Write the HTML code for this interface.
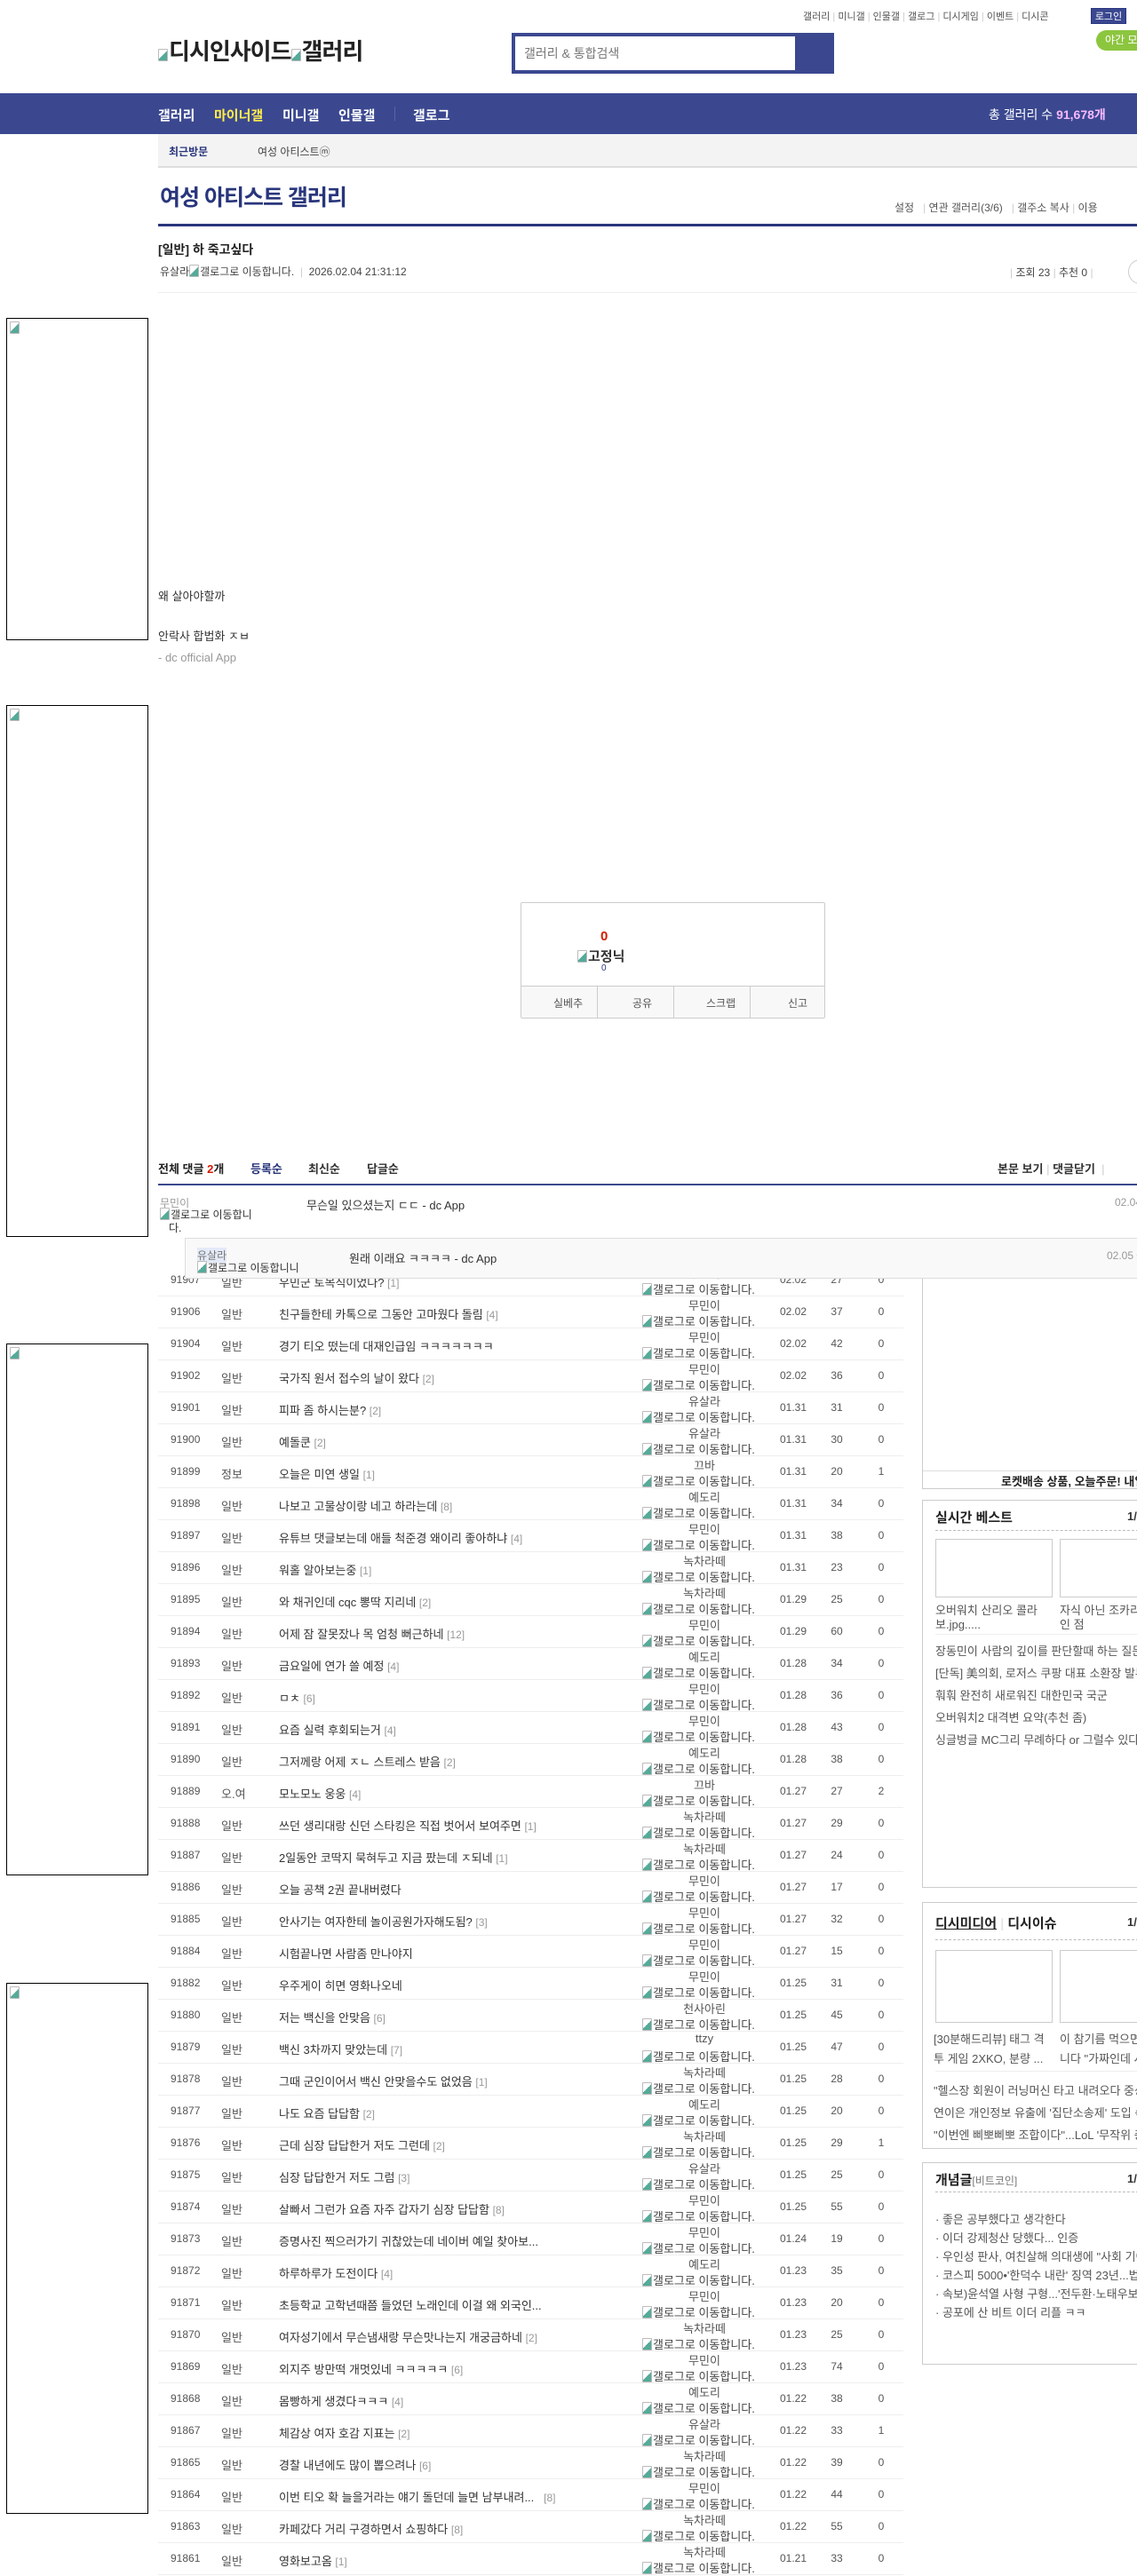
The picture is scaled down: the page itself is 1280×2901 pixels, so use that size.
<!DOCTYPE html>
<html><head><meta charset="utf-8">
<style>
*{margin:0;padding:0;box-sizing:border-box}
body{width:1280px;height:2880px;position:relative;overflow:hidden;background:#fff;font-family:"Liberation Sans","Noto Sans CJK KR",sans-serif;font-size:13px;color:#333}
.a{position:absolute;white-space:nowrap}
.ad{position:absolute;left:7px;width:160px;border:1px solid #000}
.r{position:absolute;left:178px;width:839px;height:36px;border-bottom:1px solid #eee;font-size:13px}
.r span{position:absolute;white-space:nowrap}
.r .n{left:14px;top:10px;font-size:12px;color:#555}
.r .t{left:71px;top:10px;color:#555}
.r .s{left:136px;top:10px;color:#333}
.r .s i{font-style:normal;color:#999;font-size:12px}
.r .w{left:545px;width:140px;text-align:center;top:0;color:#555}
.r .g{left:545px;top:18px;color:#444}
.r .d{left:700px;top:10px;font-size:12px;color:#555}
.r .v{left:752px;width:24px;text-align:center;top:10px;font-size:12px;color:#555}
.r .c{left:802px;width:24px;text-align:center;top:10px;font-size:12px;color:#555}
.ib{display:inline-block;width:11px;height:14px;border:1px solid #bbb;border-radius:1px;background:linear-gradient(135deg,#fff 50%,#5a9 50%);vertical-align:-2px;margin-right:1px}
.r .ib{position:static}
.sb{position:absolute;left:1038px;width:260px;border:1px solid #ccc;background:#fff}
.sb .h{position:absolute;left:14px;font-size:15px;font-weight:bold;color:#222}
.sb .dash{position:absolute;left:14px;right:0;border-top:1px dashed #bbb}
.sb .th{position:absolute;width:132px;border:1px solid #ccc}
.sb .li{position:absolute;left:14px;font-size:13px;color:#555;white-space:nowrap}
</style></head><body>

<div class="a" style="left:904px;top:10px;font-size:11px;color:#555">갤러리 <span style="color:#ccc">|</span> 미니갤 <span style="color:#ccc">|</span> 인물갤 <span style="color:#ccc">|</span> 갤로그 <span style="color:#ccc">|</span> 디시게임 <span style="color:#ccc">|</span> 이벤트 <span style="color:#ccc">|</span> 디시콘</div>
<div class="a" style="left:1228px;top:9px;width:40px;height:18px;background:#3b4890;color:#fff;font-size:11px;text-align:center;line-height:18px;border:1px solid #293680">로그인</div>
<div class="a" style="left:1234px;top:34px;width:60px;height:23px;background:#8cc63f;border-radius:12px;color:#fff;font-size:12px;line-height:23px;padding-left:10px">야간 모드</div>

<div class="a" style="left:178px;top:38px;font-size:26px;font-weight:bold;color:#222;letter-spacing:-1px"><span class="ib"></span>디시인사이드<span class="ib"></span>갤러리</div>
<div class="a" style="left:576px;top:37px;width:363px;height:46px;background:#3b4890"></div>
<div class="a" style="left:580px;top:41px;width:315px;height:38px;background:#fff;font-size:14px;color:#777;line-height:38px;padding-left:10px">갤러리 &amp; 통합검색</div>

<div class="a" style="left:0;top:105px;width:1280px;height:46px;background:#3b4890"></div>
<div class="a" style="left:178px;top:119px;font-size:15px;font-weight:bold;color:#fff">갤러리</div>
<div class="a" style="left:241px;top:119px;font-size:15px;font-weight:bold;color:#ffed4b">마이너갤</div>
<div class="a" style="left:318px;top:119px;font-size:15px;font-weight:bold;color:#fff">미니갤</div>
<div class="a" style="left:381px;top:119px;font-size:15px;font-weight:bold;color:#fff">인물갤</div>
<div class="a" style="left:444px;top:120px;width:1px;height:16px;background:#5a66a8"></div>
<div class="a" style="left:465px;top:119px;font-size:15px;font-weight:bold;color:#fff">갤로그</div>
<div class="a" style="left:1113px;top:119px;font-size:14px;color:#fff">총 갤러리 수 <b style="color:#f7b9ff">91,678개</b></div>

<div class="a" style="left:178px;top:151px;width:1102px;height:38px;background:#f3f3f3;border-bottom:2px solid #ddd"></div>
<div class="a" style="left:190px;top:162px;font-size:12px;font-weight:bold;color:#29367c">최근방문</div>
<div class="a" style="left:290px;top:162px;font-size:12px;color:#444">여성 아티스트ⓜ</div>

<div class="a" style="left:180px;top:203px;font-size:25px;font-weight:bold;color:#29367c;letter-spacing:-1px">여성 아티스트 갤러리</div>
<div class="a" style="left:1007px;top:225px;font-size:12px;color:#555">설정 &nbsp; <span style="color:#ccc">|</span> 연관 갤러리(3/6) &nbsp; <span style="color:#ccc">|</span> 갤주소 복사 <span style="color:#ccc">|</span> 이용</div>
<div class="a" style="left:178px;top:252px;width:1102px;height:3px;background:#29367c"></div>

<div class="a" style="left:178px;top:271px;font-size:14px;font-weight:bold;color:#222">[일반] 하 죽고싶다</div>
<div class="a" style="left:180px;top:297px;font-size:12px;color:#444">유살라<span class="ib"></span>갤로그로 이동합니다. <span style="color:#ccc">&nbsp;|&nbsp;</span> 2026.02.04 21:31:12</div>
<div class="a" style="left:1137px;top:298px;font-size:12px;color:#444"><span style="color:#ccc">|</span> 조회 23 <span style="color:#ccc">|</span> 추천 0 <span style="color:#ccc">|</span></div>
<div class="a" style="left:1270px;top:292px;width:28px;height:28px;border:1px solid #ccc;border-radius:50%"></div>
<div class="a" style="left:178px;top:329px;width:1102px;height:1px;background:#eee"></div>

<div class="ad" style="top:358px;height:363px"><span class="ib" style="margin:3px"></span></div>
<div class="ad" style="top:794px;height:599px"><span class="ib" style="margin:3px"></span></div>
<div class="ad" style="top:1513px;height:599px"><span class="ib" style="margin:3px"></span></div>
<div class="ad" style="top:2233px;height:598px"><span class="ib" style="margin:3px"></span></div>

<div class="a" style="left:178px;top:661px;font-size:13px;color:#333">왜 살아야할까</div>
<div class="a" style="left:178px;top:706px;font-size:13px;color:#333">안락사 합법화 ㅈㅂ</div>
<div class="a" style="left:178px;top:733px;font-size:13px;color:#999">- dc official App</div>

<div class="a" style="left:586px;top:1016px;width:343px;height:131px;border:1px solid #ccc;border-radius:2px"></div>
<div class="a" style="left:676px;top:1046px;font-size:15px;font-weight:bold;color:#d31900">0</div>
<div class="a" style="left:650px;top:1066px;font-size:15px;font-weight:bold;color:#333"><span class="ib"></span>고정닉</div>
<div class="a" style="left:677px;top:1085px;font-size:10px;color:#29367c">0</div>
<div class="a" style="left:587px;top:1110px;width:341px;height:36px;background:#f8f8f8;border-top:1px solid #ccc"></div>
<div class="a" style="left:672px;top:1111px;width:1px;height:35px;background:#ccc"></div>
<div class="a" style="left:758px;top:1111px;width:1px;height:35px;background:#ccc"></div>
<div class="a" style="left:844px;top:1111px;width:1px;height:35px;background:#ccc"></div>
<div class="a" style="left:623px;top:1121px;font-size:12px;color:#555">실베추</div>
<div class="a" style="left:712px;top:1121px;font-size:12px;color:#555">공유</div>
<div class="a" style="left:795px;top:1121px;font-size:12px;color:#555">스크랩</div>
<div class="a" style="left:887px;top:1121px;font-size:12px;color:#555">신고</div>

<div class="a" style="left:178px;top:1306px;font-size:13px;font-weight:bold;color:#222">전체 댓글 <span style="color:#d31900">2</span>개</div>
<div class="a" style="left:282px;top:1306px;font-size:13px;font-weight:bold;color:#29367c">등록순</div>
<div class="a" style="left:347px;top:1306px;font-size:13px;font-weight:bold;color:#333">최신순</div>
<div class="a" style="left:413px;top:1306px;font-size:13px;font-weight:bold;color:#333">답글순</div>
<div class="a" style="left:1123px;top:1306px;font-size:13px;font-weight:bold;color:#333">본문 보기 <span style="color:#ccc;font-weight:normal">|</span> 댓글닫기 &nbsp;<span style="color:#ccc;font-weight:normal">|</span></div>
<div class="a" style="left:178px;top:1333px;width:1102px;height:2px;background:#3b4890"></div>
<div class="a" style="left:180px;top:1346px;font-size:12px;color:#999">무민이</div>
<div class="a" style="left:180px;top:1360px;font-size:12px;color:#333;line-height:15px;white-space:normal;width:130px"><span class="ib"></span>갤로그로 이동합니<br>&nbsp;&nbsp;&nbsp;다.</div>
<div class="a" style="left:345px;top:1347px;font-size:13px;color:#333">무슨일 있으셨는지 ㄷㄷ - dc App</div>
<div class="a" style="left:1255px;top:1347px;font-size:12px;color:#999">02.04</div>

<div id="rows">
<div class="r" style="top:1424px"><span class="n">91907</span><span class="t">일반</span><span class="s">우민군 토목직이었나? <i>[1]</i></span><span class="w">무민이</span><span class="g"><span class="ib"></span>갤로그로 이동합니다.</span><span class="d">02.02</span><span class="v">27</span><span class="c">0</span></div>
<div class="r" style="top:1460px"><span class="n">91906</span><span class="t">일반</span><span class="s">친구들한테 카톡으로 그동안 고마웠다 돌림 <i>[4]</i></span><span class="w">무민이</span><span class="g"><span class="ib"></span>갤로그로 이동합니다.</span><span class="d">02.02</span><span class="v">37</span><span class="c">0</span></div>
<div class="r" style="top:1496px"><span class="n">91904</span><span class="t">일반</span><span class="s">경기 티오 떴는데 대재인급임 ㅋㅋㅋㅋㅋㅋㅋ</span><span class="w">무민이</span><span class="g"><span class="ib"></span>갤로그로 이동합니다.</span><span class="d">02.02</span><span class="v">42</span><span class="c">0</span></div>
<div class="r" style="top:1532px"><span class="n">91902</span><span class="t">일반</span><span class="s">국가직 원서 접수의 날이 왔다 <i>[2]</i></span><span class="w">무민이</span><span class="g"><span class="ib"></span>갤로그로 이동합니다.</span><span class="d">02.02</span><span class="v">36</span><span class="c">0</span></div>
<div class="r" style="top:1568px"><span class="n">91901</span><span class="t">일반</span><span class="s">피파 좀 하시는분? <i>[2]</i></span><span class="w">유살라</span><span class="g"><span class="ib"></span>갤로그로 이동합니다.</span><span class="d">01.31</span><span class="v">31</span><span class="c">0</span></div>
<div class="r" style="top:1604px"><span class="n">91900</span><span class="t">일반</span><span class="s">예돌쿤 <i>[2]</i></span><span class="w">유살라</span><span class="g"><span class="ib"></span>갤로그로 이동합니다.</span><span class="d">01.31</span><span class="v">30</span><span class="c">0</span></div>
<div class="r" style="top:1640px"><span class="n">91899</span><span class="t">정보</span><span class="s">오늘은 미연 생일 <i>[1]</i></span><span class="w">끄바</span><span class="g"><span class="ib"></span>갤로그로 이동합니다.</span><span class="d">01.31</span><span class="v">20</span><span class="c">1</span></div>
<div class="r" style="top:1676px"><span class="n">91898</span><span class="t">일반</span><span class="s">나보고 고물상이랑 네고 하라는데 <i>[8]</i></span><span class="w">예도리</span><span class="g"><span class="ib"></span>갤로그로 이동합니다.</span><span class="d">01.31</span><span class="v">34</span><span class="c">0</span></div>
<div class="r" style="top:1712px"><span class="n">91897</span><span class="t">일반</span><span class="s">유튜브 댓글보는데 애들 척준경 왜이리 좋아하냐 <i>[4]</i></span><span class="w">무민이</span><span class="g"><span class="ib"></span>갤로그로 이동합니다.</span><span class="d">01.31</span><span class="v">38</span><span class="c">0</span></div>
<div class="r" style="top:1748px"><span class="n">91896</span><span class="t">일반</span><span class="s">워홀 알아보는중 <i>[1]</i></span><span class="w">녹차라떼</span><span class="g"><span class="ib"></span>갤로그로 이동합니다.</span><span class="d">01.31</span><span class="v">23</span><span class="c">0</span></div>
<div class="r" style="top:1784px"><span class="n">91895</span><span class="t">일반</span><span class="s">와 채귀인데 cqc 뽕딱 지리네 <i>[2]</i></span><span class="w">녹차라떼</span><span class="g"><span class="ib"></span>갤로그로 이동합니다.</span><span class="d">01.29</span><span class="v">25</span><span class="c">0</span></div>
<div class="r" style="top:1820px"><span class="n">91894</span><span class="t">일반</span><span class="s">어제 잠 잘못잤나 목 엄청 뻐근하네 <i>[12]</i></span><span class="w">무민이</span><span class="g"><span class="ib"></span>갤로그로 이동합니다.</span><span class="d">01.29</span><span class="v">60</span><span class="c">0</span></div>
<div class="r" style="top:1856px"><span class="n">91893</span><span class="t">일반</span><span class="s">금요일에 연가 쓸 예정 <i>[4]</i></span><span class="w">예도리</span><span class="g"><span class="ib"></span>갤로그로 이동합니다.</span><span class="d">01.28</span><span class="v">34</span><span class="c">0</span></div>
<div class="r" style="top:1892px"><span class="n">91892</span><span class="t">일반</span><span class="s">ㅁㅊ <i>[6]</i></span><span class="w">무민이</span><span class="g"><span class="ib"></span>갤로그로 이동합니다.</span><span class="d">01.28</span><span class="v">36</span><span class="c">0</span></div>
<div class="r" style="top:1928px"><span class="n">91891</span><span class="t">일반</span><span class="s">요즘 실력 후회되는거 <i>[4]</i></span><span class="w">무민이</span><span class="g"><span class="ib"></span>갤로그로 이동합니다.</span><span class="d">01.28</span><span class="v">43</span><span class="c">0</span></div>
<div class="r" style="top:1964px"><span class="n">91890</span><span class="t">일반</span><span class="s">그저께랑 어제 ㅈㄴ 스트레스 받음 <i>[2]</i></span><span class="w">예도리</span><span class="g"><span class="ib"></span>갤로그로 이동합니다.</span><span class="d">01.28</span><span class="v">38</span><span class="c">0</span></div>
<div class="r" style="top:2000px"><span class="n">91889</span><span class="t">오.여</span><span class="s">모노모노 웅웅 <i>[4]</i></span><span class="w">끄바</span><span class="g"><span class="ib"></span>갤로그로 이동합니다.</span><span class="d">01.27</span><span class="v">27</span><span class="c">2</span></div>
<div class="r" style="top:2036px"><span class="n">91888</span><span class="t">일반</span><span class="s">쓰던 생리대랑 신던 스타킹은 직접 벗어서 보여주면 <i>[1]</i></span><span class="w">녹차라떼</span><span class="g"><span class="ib"></span>갤로그로 이동합니다.</span><span class="d">01.27</span><span class="v">29</span><span class="c">0</span></div>
<div class="r" style="top:2072px"><span class="n">91887</span><span class="t">일반</span><span class="s">2일동안 코딱지 묵혀두고 지금 팠는데 ㅈ되네 <i>[1]</i></span><span class="w">녹차라떼</span><span class="g"><span class="ib"></span>갤로그로 이동합니다.</span><span class="d">01.27</span><span class="v">24</span><span class="c">0</span></div>
<div class="r" style="top:2108px"><span class="n">91886</span><span class="t">일반</span><span class="s">오늘 공책 2권 끝내버렸다</span><span class="w">무민이</span><span class="g"><span class="ib"></span>갤로그로 이동합니다.</span><span class="d">01.27</span><span class="v">17</span><span class="c">0</span></div>
<div class="r" style="top:2144px"><span class="n">91885</span><span class="t">일반</span><span class="s">안사기는 여자한테 놀이공원가자해도됨? <i>[3]</i></span><span class="w">무민이</span><span class="g"><span class="ib"></span>갤로그로 이동합니다.</span><span class="d">01.27</span><span class="v">32</span><span class="c">0</span></div>
<div class="r" style="top:2180px"><span class="n">91884</span><span class="t">일반</span><span class="s">시험끝나면 사람좀 만나야지</span><span class="w">무민이</span><span class="g"><span class="ib"></span>갤로그로 이동합니다.</span><span class="d">01.27</span><span class="v">15</span><span class="c">0</span></div>
<div class="r" style="top:2216px"><span class="n">91882</span><span class="t">일반</span><span class="s">우주게이 히면 영화나오네</span><span class="w">무민이</span><span class="g"><span class="ib"></span>갤로그로 이동합니다.</span><span class="d">01.25</span><span class="v">31</span><span class="c">0</span></div>
<div class="r" style="top:2252px"><span class="n">91880</span><span class="t">일반</span><span class="s">저는 백신을 안맞음 <i>[6]</i></span><span class="w">천사아린</span><span class="g"><span class="ib"></span>갤로그로 이동합니다.</span><span class="d">01.25</span><span class="v">45</span><span class="c">0</span></div>
<div class="r" style="top:2288px"><span class="n">91879</span><span class="t">일반</span><span class="s">백신 3차까지 맞았는데 <i>[7]</i></span><span class="w">ttzy</span><span class="g"><span class="ib"></span>갤로그로 이동합니다.</span><span class="d">01.25</span><span class="v">47</span><span class="c">0</span></div>
<div class="r" style="top:2324px"><span class="n">91878</span><span class="t">일반</span><span class="s">그때 군인이어서 백신 안맞을수도 없었음 <i>[1]</i></span><span class="w">녹차라떼</span><span class="g"><span class="ib"></span>갤로그로 이동합니다.</span><span class="d">01.25</span><span class="v">28</span><span class="c">0</span></div>
<div class="r" style="top:2360px"><span class="n">91877</span><span class="t">일반</span><span class="s">나도 요즘 답답함 <i>[2]</i></span><span class="w">예도리</span><span class="g"><span class="ib"></span>갤로그로 이동합니다.</span><span class="d">01.25</span><span class="v">20</span><span class="c">0</span></div>
<div class="r" style="top:2396px"><span class="n">91876</span><span class="t">일반</span><span class="s">근데 심장 답답한거 저도 그런데 <i>[2]</i></span><span class="w">녹차라떼</span><span class="g"><span class="ib"></span>갤로그로 이동합니다.</span><span class="d">01.25</span><span class="v">29</span><span class="c">1</span></div>
<div class="r" style="top:2432px"><span class="n">91875</span><span class="t">일반</span><span class="s">심장 답답한거 저도 그럼 <i>[3]</i></span><span class="w">유살라</span><span class="g"><span class="ib"></span>갤로그로 이동합니다.</span><span class="d">01.25</span><span class="v">25</span><span class="c">0</span></div>
<div class="r" style="top:2468px"><span class="n">91874</span><span class="t">일반</span><span class="s">살빠서 그런가 요즘 자주 갑자기 심장 답답함 <i>[8]</i></span><span class="w">무민이</span><span class="g"><span class="ib"></span>갤로그로 이동합니다.</span><span class="d">01.25</span><span class="v">55</span><span class="c">0</span></div>
<div class="r" style="top:2504px"><span class="n">91873</span><span class="t">일반</span><span class="s">증명사진 찍으러가기 귀찮았는데 네이버 예일 찾아보...</span><span class="w">무민이</span><span class="g"><span class="ib"></span>갤로그로 이동합니다.</span><span class="d">01.24</span><span class="v">19</span><span class="c">0</span></div>
<div class="r" style="top:2540px"><span class="n">91872</span><span class="t">일반</span><span class="s">하루하루가 도전이다 <i>[4]</i></span><span class="w">예도리</span><span class="g"><span class="ib"></span>갤로그로 이동합니다.</span><span class="d">01.23</span><span class="v">35</span><span class="c">0</span></div>
<div class="r" style="top:2576px"><span class="n">91871</span><span class="t">일반</span><span class="s">초등학교 고학년때쯤 들었던 노래인데 이걸 왜 외국인...</span><span class="w">무민이</span><span class="g"><span class="ib"></span>갤로그로 이동합니다.</span><span class="d">01.23</span><span class="v">20</span><span class="c">0</span></div>
<div class="r" style="top:2612px"><span class="n">91870</span><span class="t">일반</span><span class="s">여자성기에서 무슨냄새랑 무슨맛나는지 개궁금하네 <i>[2]</i></span><span class="w">녹차라떼</span><span class="g"><span class="ib"></span>갤로그로 이동합니다.</span><span class="d">01.23</span><span class="v">25</span><span class="c">0</span></div>
<div class="r" style="top:2648px"><span class="n">91869</span><span class="t">일반</span><span class="s">외지주 방만떡 개멋있네 ㅋㅋㅋㅋㅋ <i>[6]</i></span><span class="w">무민이</span><span class="g"><span class="ib"></span>갤로그로 이동합니다.</span><span class="d">01.23</span><span class="v">74</span><span class="c">0</span></div>
<div class="r" style="top:2684px"><span class="n">91868</span><span class="t">일반</span><span class="s">몸빵하게 생겼다ㅋㅋㅋ <i>[4]</i></span><span class="w">예도리</span><span class="g"><span class="ib"></span>갤로그로 이동합니다.</span><span class="d">01.22</span><span class="v">38</span><span class="c">0</span></div>
<div class="r" style="top:2720px"><span class="n">91867</span><span class="t">일반</span><span class="s">체감상 여자 호감 지표는 <i>[2]</i></span><span class="w">유살라</span><span class="g"><span class="ib"></span>갤로그로 이동합니다.</span><span class="d">01.22</span><span class="v">33</span><span class="c">1</span></div>
<div class="r" style="top:2756px"><span class="n">91865</span><span class="t">일반</span><span class="s">경찰 내년에도 많이 뽑으려나 <i>[6]</i></span><span class="w">녹차라떼</span><span class="g"><span class="ib"></span>갤로그로 이동합니다.</span><span class="d">01.22</span><span class="v">39</span><span class="c">0</span></div>
<div class="r" style="top:2792px"><span class="n">91864</span><span class="t">일반</span><span class="s">이번 티오 확 늘을거라는 얘기 돌던데 늘면 남부내려... &nbsp; <i>[8]</i></span><span class="w">무민이</span><span class="g"><span class="ib"></span>갤로그로 이동합니다.</span><span class="d">01.22</span><span class="v">44</span><span class="c">0</span></div>
<div class="r" style="top:2828px"><span class="n">91863</span><span class="t">일반</span><span class="s">카페갔다 거리 구경하면서 쇼핑하다 <i>[8]</i></span><span class="w">녹차라떼</span><span class="g"><span class="ib"></span>갤로그로 이동합니다.</span><span class="d">01.22</span><span class="v">55</span><span class="c">0</span></div>
<div class="r" style="top:2864px"><span class="n">91861</span><span class="t">일반</span><span class="s">영화보고옴 <i>[1]</i></span><span class="w">녹차라떼</span><span class="g"><span class="ib"></span>갤로그로 이동합니다.</span><span class="d">01.21</span><span class="v">33</span><span class="c">0</span></div>
</div>

<div class="a" style="left:208px;top:1394px;width:1080px;height:46px;background:#f9f9f9;border:1px solid #ddd;z-index:5"></div>
<div class="a" style="left:222px;top:1405px;font-size:12px;color:#777;background:#e4eaf8;z-index:6">유살라</div>
<div class="a" style="left:222px;top:1419px;font-size:12px;color:#333;z-index:6"><span class="ib"></span>갤로그로 이동합니니</div>
<div class="a" style="left:393px;top:1407px;font-size:13px;color:#333;z-index:6">원래 이래요 ㅋㅋㅋㅋ - dc App</div>
<div class="a" style="left:1246px;top:1407px;font-size:12px;color:#999;z-index:6">02.05 0</div>

<div class="sb" style="top:1430px;height:247px;z-index:1">
  <div style="position:absolute;left:0;right:0;top:225px;border-top:1px solid #ddd"></div>
  <div class="a" style="left:88px;top:227px;font-size:13px;font-weight:bold;color:#222">로켓배송 상품, 오늘주문! 내일</div>
</div>
<div class="sb" style="top:1689px;height:437px">
  <div class="h" style="top:8px">실시간 베스트</div>
  <div class="a" style="left:230px;top:10px;font-size:13px;font-weight:bold">1/4</div>
  <div class="dash" style="top:33px"></div>
  <div class="th" style="left:14px;top:43px;height:66px"></div>
  <div class="th" style="left:154px;top:43px;height:66px"></div>
  <div class="li" style="top:113px">오버워치 산리오 콜라</div>
  <div class="li" style="top:129px">보.jpg.....</div>
  <div class="li" style="left:154px;top:113px">자식 아닌 조카리</div>
  <div class="li" style="left:154px;top:129px">인 점</div>
  <div class="a" style="left:14px;right:0;top:150px;border-top:1px solid #eee"></div>
  <div class="li" style="top:159px">장동민이 사람의 깊이를 판단할때 하는 질문</div>
  <div class="li" style="top:184px">[단독] 美의회, 로저스 쿠팡 대표 소환장 발부</div>
  <div class="li" style="top:209px">훠훠 완전히 새로워진 대한민국 국군</div>
  <div class="li" style="top:234px">오버워치2 대격변 요약(추천 좀)</div>
  <div class="li" style="top:259px">싱글벙글 MC그리 무례하다 or 그럴수 있다</div>
</div>
<div class="sb" style="top:2142px;height:278px">
  <div class="h" style="top:12px"><u>디시미디어</u> <span style="color:#ddd;font-weight:normal">|</span> 디시이슈</div>
  <div class="a" style="left:230px;top:14px;font-size:13px;font-weight:bold">1/4</div>
  <div class="dash" style="top:41px"></div>
  <div class="th" style="left:14px;top:53px;height:82px"></div>
  <div class="th" style="left:154px;top:53px;height:82px"></div>
  <div class="li" style="left:12px;top:143px">[30분해드리뷰] 태그 격</div>
  <div class="li" style="left:12px;top:165px">투 게임 2XKO, 분량 ...</div>
  <div class="li" style="left:154px;top:143px">이 참기름 먹으면</div>
  <div class="li" style="left:154px;top:165px">니다 "가짜인데 사</div>
  <div class="a" style="left:14px;right:0;top:189px;border-top:1px solid #eee"></div>
  <div class="li" style="left:12px;top:201px">"헬스장 회원이 러닝머신 타고 내려오다 중상</div>
  <div class="li" style="left:12px;top:226px">연이은 개인정보 유출에 '집단소송제' 도입 속</div>
  <div class="li" style="left:12px;top:251px">"이번엔 삐뽀삐뽀 조합이다"...LoL '무작위 총</div>
</div>
<div class="sb" style="top:2435px;height:228px">
  <div class="h" style="top:8px">개념글<span style="font-weight:normal;font-size:12px;color:#777">[비트코인]</span></div>
  <div class="a" style="left:230px;top:10px;font-size:13px;font-weight:bold">1/2</div>
  <div class="dash" style="top:32px"></div>
  <div class="li" style="top:53px">· 좋은 공부했다고 생각한다</div>
  <div class="li" style="top:74px">· 이더 강제청산 당했다... 인증</div>
  <div class="li" style="top:95px">· 우인성 판사, 여친살해 의대생에 "사회 기여</div>
  <div class="li" style="top:116px">· 코스피 5000•'한덕수 내란' 징역 23년...법</div>
  <div class="li" style="top:137px">· 속보)윤석열 사형 구형...'전두환·노태우보</div>
  <div class="li" style="top:158px">· 공포에 산 비트 이더 리플 ㅋㅋ</div>
</div>
</body></html>
